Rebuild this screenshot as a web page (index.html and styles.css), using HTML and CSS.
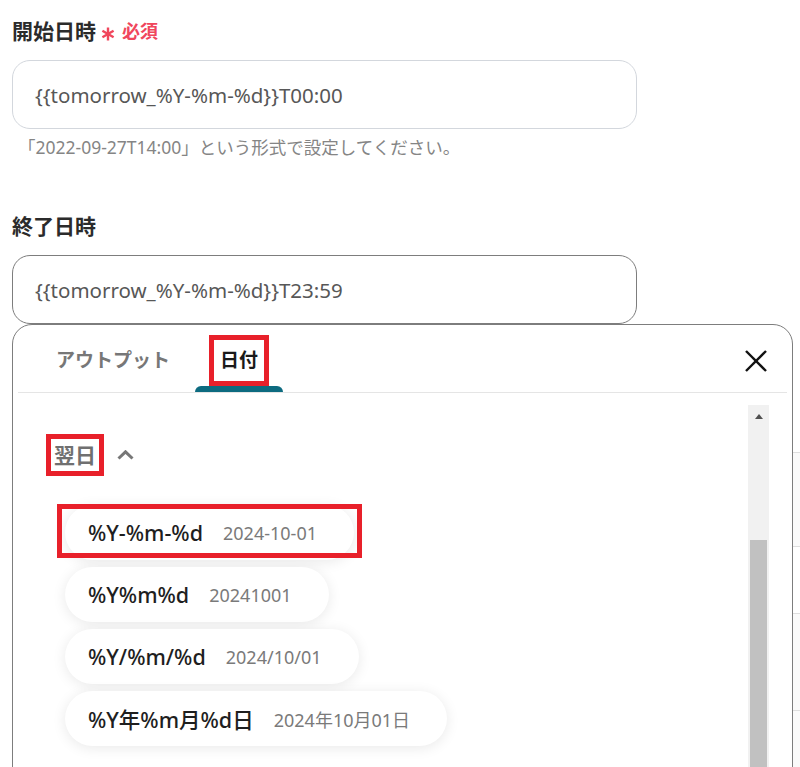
FILE: index.html
```html
<!DOCTYPE html>
<html>
    <head>
        <title>日時の設定</title>
        <link rel="stylesheet" href="styles.css">
    </head>
    <body>
        <div class="page">
            <div class="field">
                <div class="field-label">
                    開始日時
                    <span class="req">
                        <svg class="req-mark" width="14" height="14" viewBox="0 0 14 14">
                            <line x1="7" y1="0.5" x2="7" y2="13.5"/>
                            <line x1="1.4" y1="3.75" x2="12.6" y2="10.25"/>
                            <line x1="1.4" y1="10.25" x2="12.6" y2="3.75"/>
                        </svg>
                        必須
                    </span>
                </div>
                <div class="input">{{tomorrow_%Y-%m-%d}}T00:00</div>
                <p class="hint">「2022-09-27T14:00」という形式で設定してください。</p>
            </div>

            <div class="field field-open">
                <div class="field-label">終了日時</div>
                <div class="input input-open">{{tomorrow_%Y-%m-%d}}T23:59</div>

                <div class="picker">
                    <div class="picker-head">
                        <div class="tabs">
                            <div class="tab">
                                <span class="tab-label">アウトプット</span>
                                <span class="tab-bar"></span>
                            </div>
                            <div class="tab tab-active">
                                <span class="tab-label mark">日付</span>
                                <span class="tab-bar"></span>
                            </div>
                        </div>
                        <button type="button" class="close">
                            <svg width="22" height="22" viewBox="0 0 22 22">
                                <line x1="1" y1="1" x2="21" y2="21"/>
                                <line x1="21" y1="1" x2="1" y2="21"/>
                            </svg>
                        </button>
                    </div>

                    <div class="picker-body">
                        <div class="picker-list">
                            <div class="group-head">
                                <span class="group-title mark">翌日</span>
                                <svg class="chevron" width="17" height="10" viewBox="0 0 17 10">
                                    <polyline points="1.5,8.5 8.5,1.8 15.5,8.5"/>
                                </svg>
                            </div>
                            <div class="chips">
                                <div class="chip chip-marked">
                                    <span class="chip-main">%Y-%m-%d</span>
                                    <span class="chip-sub">2024-10-01</span>
                                </div>
                                <div class="chip">
                                    <span class="chip-main">%Y%m%d</span>
                                    <span class="chip-sub">20241001</span>
                                </div>
                                <div class="chip">
                                    <span class="chip-main">%Y/%m/%d</span>
                                    <span class="chip-sub">2024/10/01</span>
                                </div>
                                <div class="chip">
                                    <span class="chip-main">%Y年%m月%d日</span>
                                    <span class="chip-sub">2024年10月01日</span>
                                </div>
                            </div>
                        </div>
                        <div class="scrollbar">
                            <span class="scroll-up"></span>
                            <span class="scroll-thumb"></span>
                        </div>
                    </div>
                </div>
            </div>

            <!-- rows of the form that sit under the open picker -->
            <div class="behind">
                <div class="behind-row row-a"></div>
                <div class="behind-row row-b"></div>
                <div class="behind-row row-c"></div>
                <div class="behind-row row-d"></div>
            </div>
        </div>
    </body>
</html>
```

FILE: styles.css
```css
html, body {
    margin: 0;
    padding: 0;
    overflow: hidden;
}

body {
    font-family: "Noto Sans", "Noto Sans CJK JP", sans-serif;
    color: #222222;
    background-color: #ffffff;
}

.page {
    padding: 16px 0 0 12px;
}

.field {
    position: relative;
    width: 625px;
}

.field-open {
    margin-top: 53px;
}

.field-label {
    display: flex;
    align-items: center;
    font-size: 21px;
    font-weight: 700;
    line-height: 30px;
    color: #2b2b2b;
}

.req {
    display: flex;
    align-items: center;
    margin-left: 5px;
    font-size: 18px;
    color: #f0465c;
}

.req-mark {
    margin-top: 6px;
    margin-right: 7px;
    stroke: #f0465c;
    stroke-width: 2.4;
}

.input {
    box-sizing: border-box;
    width: 625px;
    height: 69px;
    margin-top: 14px;
    padding: 0 22px;
    display: flex;
    align-items: center;
    border: 1px solid #d3d7dd;
    border-radius: 18px;
    font-size: 20.5px;
    color: #575757;
}

.input-open {
    border-color: #7d7d7d;
}

.hint {
    margin: 7px 0 0 6px;
    font-size: 17.5px;
    line-height: 22px;
    color: #858585;
}

/* picker */

.picker {
    position: absolute;
    left: 0;
    top: 100%;
    width: 781px;
    height: 470px;
    box-sizing: border-box;
    display: flex;
    flex-direction: column;
    border: 1px solid #7d7d7d;
    border-radius: 20px;
    background-color: #ffffff;
}

.picker-head {
    display: flex;
    height: 67px;
    margin: 0 5px;
    border-bottom: 1px solid #e5e5e5;
}

.tabs {
    display: flex;
    padding-left: 13px;
}

.tab {
    display: flex;
    flex-direction: column;
    align-items: center;
    padding: 0 14px;
}

.tab-label {
    margin-top: 10px;
    padding: 8px 6px;
    border: 5px solid transparent;
    font-size: 19px;
    font-weight: 700;
    line-height: 25px;
    color: #777777;
}

.tab-active .tab-label {
    color: #1a1a1a;
}

.tab-bar {
    align-self: stretch;
    height: 6px;
    margin: 0 -14px;
}

.tab-active .tab-bar {
    background-color: #0d6b80;
    border-radius: 6px 6px 0 0;
}

.mark {
    border: 5px solid #e8202a;
}

.close {
    margin: 25px 20px 0 auto;
    align-self: flex-start;
    padding: 0;
    border: none;
    background: none;
    line-height: 0;
    cursor: pointer;
}

.close svg {
    stroke: #111111;
    stroke-width: 2.4;
}

.picker-body {
    flex: 1;
    min-height: 0;
    display: flex;
    padding: 12px 23px 0 0;
    overflow: hidden;
}

.picker-list {
    flex: 1;
    padding-left: 33px;
}

.group-head {
    display: flex;
    align-items: center;
    margin-top: 29px;
}

.group-title {
    padding: 2px 3px;
    font-size: 21px;
    font-weight: 700;
    line-height: 28px;
    color: #707070;
}

.chevron {
    margin-left: 13px;
    fill: none;
    stroke: #777777;
    stroke-width: 3;
}

.chips {
    display: flex;
    flex-direction: column;
    align-items: flex-start;
    gap: 7px;
    margin: 29px 0 0 19px;
}

.chip {
    position: relative;
    height: 55px;
    display: flex;
    align-items: center;
    gap: 20px;
    padding: 0 37px 0 23px;
    border-radius: 28px;
    background-color: #ffffff;
    box-shadow: 0 2px 14px rgba(0, 0, 0, 0.09);
}

.chip-marked::after {
    content: "";
    position: absolute;
    top: -1px;
    bottom: 2px;
    left: -8px;
    right: -8px;
    border: 5px solid #e8202a;
}

.chip-main {
    font-size: 21.5px;
    font-weight: 500;
    color: #1e1e1e;
}

.chip-sub {
    font-size: 18px;
    color: #7a7a7a;
}

.scrollbar {
    width: 21px;
    display: flex;
    flex-direction: column;
    align-items: center;
    background-color: #f1f1f1;
}

.scroll-up {
    margin-top: 9px;
    border-left: 4.5px solid transparent;
    border-right: 4.5px solid transparent;
    border-bottom: 5px solid #505050;
}

.scroll-thumb {
    flex: 1;
    width: 17px;
    margin-top: 121px;
    background-color: #c1c1c1;
}

/* form rows under the picker */

.behind {
    margin-top: 128px;
}

.behind-row {
    border-top: 1px solid #dedede;
    background-color: #fafafa;
}

.row-a { height: 93px; }
.row-b { height: 66px; background-color: #ffffff; }
.row-c { height: 96px; }
.row-d { height: 80px; }
```
